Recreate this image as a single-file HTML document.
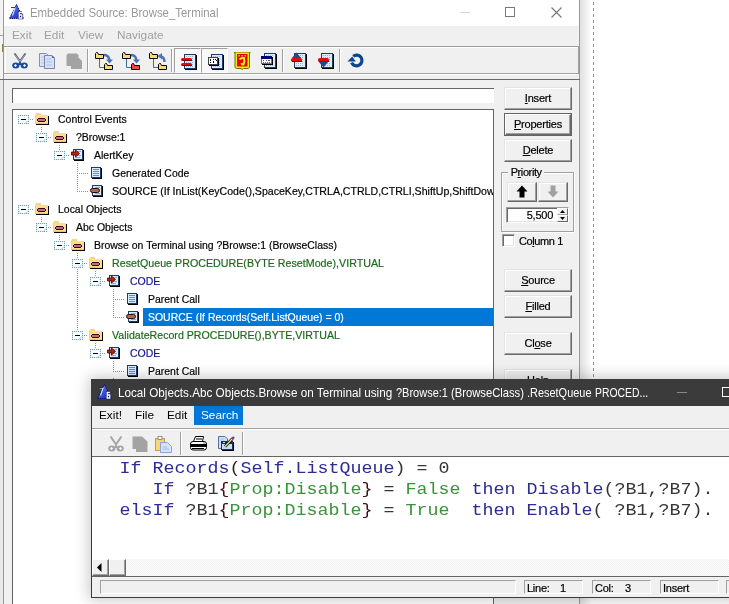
<!DOCTYPE html><html><head><meta charset="utf-8"><style>
#root{position:absolute;left:0;top:0;width:729px;height:604px;overflow:hidden;will-change:transform;background:#fff;}
html,body{margin:0;padding:0;}
body{width:729px;height:604px;overflow:hidden;position:relative;background:#fff;font-family:"Liberation Sans",sans-serif;}
div{box-sizing:border-box;}
svg{position:absolute;overflow:visible;}
.btn{letter-spacing:-0.2px;-webkit-text-stroke:0.2px currentColor;position:absolute;background:#f0f0f0;border-top:1px solid #e3e3e3;border-left:1px solid #e3e3e3;border-right:1px solid #696969;border-bottom:1px solid #696969;box-shadow:inset -1px -1px 0 #a0a0a0, inset 1px 1px 0 #fff;font-size:11px;text-align:center;color:#000;}
.tt{position:absolute;white-space:pre;font-size:11.5px;line-height:18px;color:#000;transform:scaleX(0.91);transform-origin:0 0;-webkit-text-stroke:0.2px currentColor;}
u{text-decoration:underline;text-underline-offset:1px;}
</style></head><body><div id="root">
<div style="position:absolute;left:0px;top:0px;width:3px;height:604px;background:#e9e9e9;"></div>
<div style="position:absolute;left:0px;top:0px;width:3px;height:79px;background:#f3f3f3;"></div>
<div style="position:absolute;left:0px;top:35px;width:3px;height:1px;background:#a0a0a0;"></div>
<div style="position:absolute;left:0px;top:79px;width:3px;height:1px;background:#6a6a6a;"></div>
<div style="position:absolute;left:2px;top:44px;width:1px;height:8px;background:#8a7a50;"></div>
<div style="position:absolute;left:593px;top:0px;width:1px;height:379px;background:repeating-linear-gradient(to bottom,transparent 0,transparent 2px,#8f8f8f 2px,#8f8f8f 5px,transparent 5px,transparent 6px);"></div>
<div style="position:absolute;left:580px;top:0px;width:12px;height:604px;background:linear-gradient(to right,rgba(0,0,0,0.12),rgba(0,0,0,0));"></div>
<div style="position:absolute;left:3px;top:0px;width:577px;height:604px;background:#f0f0f0;border-left:1px solid #9a9a9a;border-right:1px solid #9a9a9a;"></div>
<div style="position:absolute;left:4px;top:0px;width:575px;height:26px;background:#fff;"></div>
<svg style="left:9px;top:4px" width="16" height="16" viewBox="0 0 16 16"><defs><linearGradient id="cg" x1="0" y1="0" x2="1" y2="1"><stop offset="0" stop-color="#7088f0"/><stop offset="0.6" stop-color="#3048d8"/><stop offset="1" stop-color="#1828a8"/></linearGradient></defs><path d="M7.5 0.5 L14.5 14.5 L0.5 14.5 Z" fill="url(#cg)" stroke="#0a1470" stroke-width="1" stroke-dasharray="1.3 0.7"/><path d="M2.5 4 H6 L3.5 11.5" fill="none" stroke="#d8e0ff" stroke-width="1.1"/><path d="M2 3.5 H6" stroke="#101030" stroke-width="0.8"/><path d="M12.8 8.5 H10.2 V14 H12.8 V11 H10.2" fill="none" stroke="#0a1060" stroke-width="2.6"/><path d="M12.8 8.5 H10.2 V14 H12.8 V11 H10.2" fill="none" stroke="#fff" stroke-width="1.3"/></svg>
<div style="position:absolute;left:30px;top:5px;font-size:11.9px;line-height:16px;color:#999;white-space:pre;transform:scaleX(0.96);transform-origin:0 0;">Embedded Source: Browse_Terminal</div>
<div style="position:absolute;left:460px;top:12px;width:10px;height:1px;background:#d6d6d6;"></div>
<div style="position:absolute;left:505px;top:7px;width:10px;height:10px;border:1px solid #777;"></div>
<svg style="left:551px;top:7px" width="11" height="11" viewBox="0 0 11 11"><path d="M0.5 0.5 L10.5 10.5 M10.5 0.5 L0.5 10.5" stroke="#777" stroke-width="1.1"/></svg>
<div style="position:absolute;left:12px;top:28px;font-size:11.8px;line-height:14px;color:#a0a0a0;white-space:pre;">Exit</div>
<div style="position:absolute;left:44px;top:28px;font-size:11.8px;line-height:14px;color:#a0a0a0;white-space:pre;">Edit</div>
<div style="position:absolute;left:78px;top:28px;font-size:11.8px;line-height:14px;color:#a0a0a0;white-space:pre;">View</div>
<div style="position:absolute;left:117px;top:28px;font-size:11.8px;line-height:14px;color:#a0a0a0;white-space:pre;">Navigate</div>
<div style="position:absolute;left:4px;top:46px;width:575px;height:28px;border-top:1px solid #a0a0a0;border-bottom:1px solid #a0a0a0;border-right:1px solid #a0a0a0;"></div>
<div style="position:absolute;left:5px;top:47px;width:573px;height:1px;background:#fff;"></div>
<div style="position:absolute;left:5px;top:47px;width:1px;height:26px;background:#fff;"></div>
<div style="position:absolute;left:4px;top:74px;width:575px;height:1px;background:#fff;"></div>
<div style="position:absolute;left:3px;top:79px;width:577px;height:1px;background:#6a6a6a;"></div>
<div style="position:absolute;left:87px;top:49px;width:1px;height:23px;background:#a0a0a0;"></div>
<div style="position:absolute;left:88px;top:49px;width:1px;height:23px;background:#fff;"></div>
<div style="position:absolute;left:171px;top:49px;width:1px;height:23px;background:#a0a0a0;"></div>
<div style="position:absolute;left:172px;top:49px;width:1px;height:23px;background:#fff;"></div>
<div style="position:absolute;left:282px;top:49px;width:1px;height:23px;background:#a0a0a0;"></div>
<div style="position:absolute;left:283px;top:49px;width:1px;height:23px;background:#fff;"></div>
<div style="position:absolute;left:339px;top:49px;width:1px;height:23px;background:#a0a0a0;"></div>
<div style="position:absolute;left:340px;top:49px;width:1px;height:23px;background:#fff;"></div>
<div style="position:absolute;left:174px;top:48px;width:27px;height:25px;border-top:1px solid #a0a0a0;border-left:1px solid #a0a0a0;border-bottom:1px solid #fff;border-right:1px solid #fff;background:#f8f8f8;"></div>
<div style="position:absolute;left:201px;top:48px;width:27px;height:25px;border-top:1px solid #a0a0a0;border-left:1px solid #a0a0a0;border-bottom:1px solid #fff;border-right:1px solid #fff;background:#f8f8f8;"></div>
<svg style="left:12px;top:53px" width="17" height="17" viewBox="0 0 17 17"><path d="M2.5 0.5 L8.5 9 M13.5 0.5 L7.5 9" stroke="#505a70" stroke-width="2"/><path d="M3 1.5 L8 8.5 M13 1.5 L8 8.5" stroke="#c0c8d8" stroke-width="0.7"/><ellipse cx="3.8" cy="12.5" rx="3.6" ry="3" fill="#1a4aa0"/><ellipse cx="12.2" cy="12.5" rx="3.6" ry="3" fill="#1a4aa0"/><path d="M6.5 10 L8 8.5 L9.5 10 L9 12 H7 Z" fill="#1a4aa0"/><path d="M3.5 11 L5 12.5 L3.5 14 L2 12.5 Z M12.5 11 L14 12.5 L12.5 14 L11 12.5 Z" fill="#fff"/></svg>
<svg style="left:39px;top:53px" width="17" height="17" viewBox="0 0 17 17"><path d="M0.5 0.5 H7.5 L8.5 1.5 V13.5 H0.5 Z" fill="#dce6fa" stroke="#8890a8"/><path d="M2 4 H6 M2 7 H6 M2 10 H6" stroke="#b8c8e8"/><path d="M5.5 2.5 H13 L15.5 5 V15.5 H5.5 Z" fill="#d6e2fc" stroke="#7c84a0"/><path d="M13 2.5 L15.5 5 H13 Z" fill="#3a60b0"/><path d="M7 6 H12 M7 9 H13 M7 12 H13" stroke="#b0c0e4"/></svg>
<svg style="left:66px;top:53px" width="17" height="17" viewBox="0 0 17 17"><path d="M2 0.5 H11 L12.5 2 V5 H13 L16 8 V16 H5 V13 H0.5 V2 Z" fill="#a3a3a3"/></svg>
<svg style="left:95px;top:52px" width="19" height="19" viewBox="0 0 19 19"><path d="M4.5 7 V15.5 H9.5" fill="none" stroke="#3e6aa8" stroke-width="1"/><path d="M0.5 1.5 V6.5 H8.5 V2.5 H3.5 L2.5 0.5 H1.5 Z" fill="#f6dc78" stroke="#000"/><path d="M9 3 Q13.5 3 14.5 8" fill="none" stroke="#4a74b4" stroke-width="2.4"/><path d="M11 7.5 L18 7.5 L14.5 11.5 Z" fill="#4a74b4"/><path d="M9.5 12.5 V17.5 H17.5 V13.5 H12.5 L11.5 11.5 H10.5 Z" fill="#f8d878" stroke="#000"/></svg>
<svg style="left:122px;top:52px" width="19" height="19" viewBox="0 0 19 19"><path d="M4.5 7 V15.5 H9.5" fill="none" stroke="#3e6aa8" stroke-width="1"/><path d="M0.5 1.5 V6.5 H8.5 V2.5 H3.5 L2.5 0.5 H1.5 Z" fill="#f6dc78" stroke="#000"/><path d="M9 3 Q13.5 3 14.5 8" fill="none" stroke="#4a74b4" stroke-width="2.4"/><path d="M11 7.5 L18 7.5 L14.5 11.5 Z" fill="#4a74b4"/><path d="M9.5 12.5 V17.5 H17.5 V13.5 H12.5 L11.5 11.5 H10.5 Z" fill="#e84848" stroke="#000"/></svg>
<svg style="left:149px;top:52px" width="19" height="19" viewBox="0 0 19 19"><path d="M4.5 7 V15.5 H9.5" fill="none" stroke="#3e6aa8" stroke-width="1"/><path d="M0.5 1.5 V6.5 H8.5 V2.5 H3.5 L2.5 0.5 H1.5 Z" fill="#f6dc78" stroke="#000"/><path d="M9.5 4 Q15.5 4 15.5 10" fill="none" stroke="#4a74b4" stroke-width="2.4"/><path d="M13 1 L13 7.5 L9 4 Z" fill="#4a74b4"/><path d="M9.5 12.5 V17.5 H17.5 V13.5 H12.5 L11.5 11.5 H10.5 Z" fill="#f8d878" stroke="#000"/></svg>
<svg style="left:181px;top:54px" width="17" height="17" viewBox="0 0 17 17"><g shape-rendering="crispEdges"><rect x="15" y="1" width="1" height="15" fill="#000"/><rect x="4" y="15" width="12" height="1" fill="#000"/><rect x="3" y="0" width="12" height="15" fill="#1e3c6a"/><rect x="4" y="1" width="10" height="13" fill="#dcecfc"/></g><path d="M5 2.5 H13" stroke="#9ab4d4" stroke-dasharray="1 1"/><path d="M5 4.5 H13" stroke="#9ab4d4" stroke-dasharray="1 1"/><path d="M5 6.5 H13" stroke="#9ab4d4" stroke-dasharray="1 1"/><path d="M5 8.5 H13" stroke="#9ab4d4" stroke-dasharray="1 1"/><path d="M5 10.5 H13" stroke="#9ab4d4" stroke-dasharray="1 1"/><path d="M5 12.5 H13" stroke="#9ab4d4" stroke-dasharray="1 1"/><rect x="0" y="4" width="11" height="3" rx="1.5" fill="#e80808"/><rect x="1" y="6" width="10" height="1" fill="#7a0000"/><rect x="0" y="9" width="11" height="3" rx="1.5" fill="#e80808"/><rect x="1" y="11" width="10" height="1" fill="#7a0000"/></svg>
<svg style="left:208px;top:54px" width="17" height="17" viewBox="0 0 17 17"><g shape-rendering="crispEdges"><rect x="15" y="1" width="1" height="15" fill="#000"/><rect x="4" y="15" width="12" height="1" fill="#000"/><rect x="3" y="0" width="12" height="15" fill="#1e3c6a"/><rect x="4" y="1" width="10" height="13" fill="#dcecfc"/></g><path d="M5 2.5 H13" stroke="#9ab4d4" stroke-dasharray="1 1"/><path d="M5 4.5 H13" stroke="#9ab4d4" stroke-dasharray="1 1"/><path d="M5 6.5 H13" stroke="#9ab4d4" stroke-dasharray="1 1"/><path d="M5 8.5 H13" stroke="#9ab4d4" stroke-dasharray="1 1"/><path d="M5 10.5 H13" stroke="#9ab4d4" stroke-dasharray="1 1"/><path d="M5 12.5 H13" stroke="#9ab4d4" stroke-dasharray="1 1"/><g shape-rendering="crispEdges"><rect x="1" y="4" width="10" height="8" fill="#000"/><rect x="0" y="3" width="10" height="8" fill="#404040"/><rect x="1" y="4" width="8" height="6" fill="#fff"/><path d="M2 5.5 H3 M2 6.5 H2.5 M5 5.5 H6 M7 5.5 H8 M8 6.5 H8.5 M2 8.5 H3 M5 8.5 H6 M7.5 8.5 H8 M5 7.5 H5.5" stroke="#000"/></g></svg>
<svg style="left:234px;top:52px" width="17" height="18" viewBox="0 0 17 18"><path d="M0 0.5 H16.5" stroke="#6a6a00" stroke-width="1"/><path d="M1 0.5 V15.5 L2.5 16.5 H7 L8.2 17.5 L9.4 16.5 H14 L15.5 15.5 V0.5" fill="#f0f000" stroke="#6a6a00" stroke-width="1"/><rect x="3" y="2" width="10.5" height="12.5" fill="#e80000"/><path d="M5.5 7.5 Q7 5.5 10 6 Q11 10 9.5 12.5 Q8 13 7.5 11" fill="none" stroke="#f0f020" stroke-width="2"/><rect x="4.5" y="3" width="1.2" height="1.5" fill="#ffe0d0"/><rect x="7.5" y="3" width="1.2" height="1.5" fill="#ffe0d0"/><rect x="10.5" y="3" width="1.2" height="1.5" fill="#ffe0d0"/></svg>
<svg style="left:261px;top:53px" width="17" height="17" viewBox="0 0 17 17"><g shape-rendering="crispEdges"><rect x="15" y="1" width="1" height="15" fill="#000"/><rect x="4" y="15" width="12" height="1" fill="#000"/><rect x="3" y="0" width="12" height="15" fill="#1e3c6a"/><rect x="4" y="1" width="10" height="13" fill="#dcecfc"/></g><path d="M5 2.5 H13" stroke="#9ab4d4" stroke-dasharray="1 1"/><path d="M5 4.5 H13" stroke="#9ab4d4" stroke-dasharray="1 1"/><path d="M5 6.5 H13" stroke="#9ab4d4" stroke-dasharray="1 1"/><path d="M5 8.5 H13" stroke="#9ab4d4" stroke-dasharray="1 1"/><path d="M5 10.5 H13" stroke="#9ab4d4" stroke-dasharray="1 1"/><path d="M5 12.5 H13" stroke="#9ab4d4" stroke-dasharray="1 1"/><g shape-rendering="crispEdges"><rect x="1" y="4" width="11" height="8" fill="#000"/><rect x="0" y="3" width="11" height="8" fill="#707070"/><rect x="1" y="6" width="9" height="4" fill="#fff"/><rect x="0" y="3" width="11" height="3" fill="#000070"/><path d="M2 7.5 H3 M4.5 7.5 H5.5 M7 7.5 H9 M2 9 H3 M4 9 H5 M6 9 H7 M8 9 H9" stroke="#606060"/></g></svg>
<svg style="left:291px;top:53px" width="17" height="17" viewBox="0 0 17 17"><g shape-rendering="crispEdges"><rect x="15" y="1" width="1" height="15" fill="#000"/><rect x="4" y="15" width="12" height="1" fill="#000"/><rect x="3" y="0" width="12" height="15" fill="#1e3c6a"/><rect x="4" y="1" width="10" height="13" fill="#dcecfc"/></g><path d="M5 2.5 H13" stroke="#9ab4d4" stroke-dasharray="1 1"/><path d="M5 4.5 H13" stroke="#9ab4d4" stroke-dasharray="1 1"/><path d="M5 6.5 H13" stroke="#9ab4d4" stroke-dasharray="1 1"/><path d="M5 8.5 H13" stroke="#9ab4d4" stroke-dasharray="1 1"/><path d="M5 10.5 H13" stroke="#9ab4d4" stroke-dasharray="1 1"/><path d="M5 12.5 H13" stroke="#9ab4d4" stroke-dasharray="1 1"/><path d="M0.5 5.5 L5.5 -0.5 L10.5 5.5 Z" fill="#1e4a90"/><rect x="0" y="5" width="11" height="4" rx="1.8" fill="#e80808"/><rect x="1" y="8" width="10" height="1" fill="#7a0000"/></svg>
<svg style="left:318px;top:53px" width="17" height="17" viewBox="0 0 17 17"><g shape-rendering="crispEdges"><rect x="15" y="1" width="1" height="15" fill="#000"/><rect x="4" y="15" width="12" height="1" fill="#000"/><rect x="3" y="0" width="12" height="15" fill="#1e3c6a"/><rect x="4" y="1" width="10" height="13" fill="#dcecfc"/></g><path d="M5 2.5 H13" stroke="#9ab4d4" stroke-dasharray="1 1"/><path d="M5 4.5 H13" stroke="#9ab4d4" stroke-dasharray="1 1"/><path d="M5 6.5 H13" stroke="#9ab4d4" stroke-dasharray="1 1"/><path d="M5 8.5 H13" stroke="#9ab4d4" stroke-dasharray="1 1"/><path d="M5 10.5 H13" stroke="#9ab4d4" stroke-dasharray="1 1"/><path d="M5 12.5 H13" stroke="#9ab4d4" stroke-dasharray="1 1"/><rect x="0" y="5" width="11" height="4" rx="1.8" fill="#e80808"/><rect x="1" y="8" width="10" height="1" fill="#7a0000"/><path d="M0.5 8.5 L5.5 14.5 L10.5 8.5 Z" fill="#1e4a90"/></svg>
<svg style="left:348px;top:54px" width="17" height="15" viewBox="0 0 17 15"><path d="M5.2 2.2 A5.4 5.4 0 1 1 3.6 8.6" fill="none" stroke="#0c4490" stroke-width="3.2"/><path d="M-0.5 7.5 L4.2 2.6 L7.8 7.5 Z" fill="#0c4490"/></svg>
<div style="position:absolute;left:12px;top:88px;width:482px;height:15px;background:#fff;border-top:1px solid #646464;border-left:1px solid #646464;"></div>
<div style="position:absolute;left:12px;top:109px;width:482px;height:520px;background:#fff;border:1px solid #646464;"></div>
<div class="btn" style="left:504px;top:87px;width:68px;height:23px;line-height:20px;"><u>I</u>nsert</div>
<div style="position:absolute;left:504px;top:113px;width:68px;height:23px;border:1px solid #646464;"></div><div class="btn" style="left:505px;top:114px;width:66px;height:21px;line-height:18px;border-top-color:#fff;border-left-color:#fff;box-shadow:inset -1px -1px 0 #a0a0a0;"><u>P</u>roperties</div>
<div class="btn" style="left:504px;top:139px;width:68px;height:23px;line-height:20px;"><u>D</u>elete</div>
<div style="position:absolute;left:501px;top:172px;width:73px;height:60px;border:1px solid #a0a0a0;box-shadow:inset 1px 1px 0 #fff, 1px 1px 0 #fff;"></div>
<div style="position:absolute;left:508px;top:165px;font-size:11px;line-height:14px;color:#000;white-space:pre;letter-spacing:-0.25px;-webkit-text-stroke:0.2px currentColor;background:#f0f0f0;letter-spacing:-0.4px;"> P<u>r</u>iority </div>
<div class="btn" style="left:507px;top:182px;width:30px;height:20px;line-height:17px;"></div>
<div class="btn" style="left:538px;top:182px;width:30px;height:20px;line-height:17px;"></div>
<svg style="left:516px;top:185px" width="12" height="13" viewBox="0 0 12 13"><path d="M6 0.5 L11.5 6.5 H8.5 V12.5 H3.5 V6.5 H0.5 Z" fill="#000"/></svg>
<svg style="left:547px;top:185px" width="12" height="13" viewBox="0 0 12 13"><path d="M6 12.5 L11.5 6.5 H8.5 V0.5 H3.5 V6.5 H0.5 Z" fill="#a0a0a0"/></svg>
<div style="position:absolute;left:506px;top:207px;width:63px;height:16px;background:#fff;border-top:1px solid #a0a0a0;border-left:1px solid #a0a0a0;border-bottom:1px solid #fff;border-right:1px solid #fff;box-shadow:inset 1px 1px 0 #696969, inset -1px -1px 0 #e3e3e3;"></div>
<div style="position:absolute;left:506px;top:207px;font-size:11px;line-height:16px;color:#000;white-space:pre;letter-spacing:-0.25px;-webkit-text-stroke:0.2px currentColor;width:47px;text-align:right;">5,500</div>
<div style="position:absolute;left:557px;top:208px;width:11px;height:7px;background:#f0f0f0;border-top:1px solid #fff;border-left:1px solid #fff;border-right:1px solid #696969;border-bottom:1px solid #a0a0a0;"></div>
<div style="position:absolute;left:557px;top:215px;width:11px;height:7px;background:#f0f0f0;border-top:1px solid #fff;border-left:1px solid #fff;border-right:1px solid #696969;border-bottom:1px solid #696969;"></div>
<svg style="left:560px;top:210px" width="5" height="3" viewBox="0 0 5 3"><path d="M0 3 L2.5 0 L5 3 Z" fill="#000"/></svg>
<svg style="left:560px;top:217px" width="5" height="3" viewBox="0 0 5 3"><path d="M0 0 L2.5 3 L5 0 Z" fill="#000"/></svg>
<div style="position:absolute;left:502px;top:234px;width:13px;height:13px;background:#fff;border-top:1px solid #a0a0a0;border-left:1px solid #a0a0a0;border-right:1px solid #fff;border-bottom:1px solid #fff;box-shadow:inset 1px 1px 0 #696969, inset -1px -1px 0 #e3e3e3;"></div>
<div style="position:absolute;left:519px;top:234px;font-size:11px;line-height:14px;color:#000;white-space:pre;letter-spacing:-0.25px;-webkit-text-stroke:0.2px currentColor;letter-spacing:-0.4px;">Co<u>l</u>umn 1</div>
<div class="btn" style="left:504px;top:269px;width:68px;height:23px;line-height:20px;"><u>S</u>ource</div>
<div class="btn" style="left:504px;top:295px;width:68px;height:23px;line-height:20px;"><u>F</u>illed</div>
<div class="btn" style="left:504px;top:332px;width:68px;height:23px;line-height:20px;">Cl<u>o</u>se</div>
<div class="btn" style="left:504px;top:369px;width:68px;height:23px;line-height:20px;"><u>H</u>elp</div>
<div style="position:absolute;left:13px;top:110px;width:480px;height:494px;overflow:hidden;"><div style="position:absolute;left:-13px;top:-110px;width:729px;height:604px;"><svg style="left:18px;top:115px" width="11" height="9" viewBox="0 0 11 9"><g shape-rendering="crispEdges"><rect x="0" y="0" width="11" height="9" fill="#fafeff"/><path d="M0 0.5 H11 M0 8.5 H11 M0.5 0 V9 M10.5 0 V9" stroke="#d2eef6"/><path d="M0 0.5 H11 M0 8.5 H11 M0.5 0 V9 M10.5 0 V9" stroke="#7c9aa8" stroke-dasharray="1 1"/><rect x="3" y="4" width="5" height="1" fill="#000"/></g><path d="M10 5.5 L6.5 9" stroke="#b0c8d4" stroke-width="1"/></svg><div style="position:absolute;left:30px;top:119px;width:4px;height:1px;background:repeating-linear-gradient(to right,#909090 0,#909090 1px,transparent 1px,transparent 2px);"></div><svg style="left:35px;top:113px" width="15" height="13" viewBox="0 0 15 13"><g shape-rendering="crispEdges"><rect x="13" y="3" width="1" height="9" fill="#000"/><rect x="1" y="11" width="13" height="1" fill="#000"/><rect x="0" y="2" width="13" height="9" fill="#f9de8c"/><rect x="1" y="0" width="5" height="2" fill="#f7d880"/><rect x="0" y="1" width="1" height="1" fill="#fbe9b4"/><rect x="0" y="2" width="1" height="9" fill="#f5d070"/><rect x="0" y="10" width="13" height="1" fill="#f0c860"/><rect x="3" y="5" width="7" height="1" fill="#3a0818"/><rect x="3" y="8" width="7" height="1" fill="#3a0818"/><rect x="2" y="6" width="1" height="2" fill="#3a0818"/><rect x="10" y="6" width="1" height="2" fill="#3a0818"/><rect x="3" y="6" width="7" height="2" fill="#c46a8e"/></g></svg><div style="position:absolute;left:41px;top:127px;width:1px;height:6px;background:repeating-linear-gradient(to bottom,#909090 0,#909090 1px,transparent 1px,transparent 2px);"></div><div class="tt" style="left:58px;top:110px;color:#000;">Control Events</div><svg style="left:36px;top:133px" width="11" height="9" viewBox="0 0 11 9"><g shape-rendering="crispEdges"><rect x="0" y="0" width="11" height="9" fill="#fafeff"/><path d="M0 0.5 H11 M0 8.5 H11 M0.5 0 V9 M10.5 0 V9" stroke="#d2eef6"/><path d="M0 0.5 H11 M0 8.5 H11 M0.5 0 V9 M10.5 0 V9" stroke="#7c9aa8" stroke-dasharray="1 1"/><rect x="3" y="4" width="5" height="1" fill="#000"/></g><path d="M10 5.5 L6.5 9" stroke="#b0c8d4" stroke-width="1"/></svg><div style="position:absolute;left:48px;top:137px;width:4px;height:1px;background:repeating-linear-gradient(to right,#909090 0,#909090 1px,transparent 1px,transparent 2px);"></div><svg style="left:53px;top:131px" width="15" height="13" viewBox="0 0 15 13"><g shape-rendering="crispEdges"><rect x="13" y="3" width="1" height="9" fill="#000"/><rect x="1" y="11" width="13" height="1" fill="#000"/><rect x="0" y="2" width="13" height="9" fill="#f9de8c"/><rect x="1" y="0" width="5" height="2" fill="#f7d880"/><rect x="0" y="1" width="1" height="1" fill="#fbe9b4"/><rect x="0" y="2" width="1" height="9" fill="#f5d070"/><rect x="0" y="10" width="13" height="1" fill="#f0c860"/><rect x="3" y="5" width="7" height="1" fill="#3a0818"/><rect x="3" y="8" width="7" height="1" fill="#3a0818"/><rect x="2" y="6" width="1" height="2" fill="#3a0818"/><rect x="10" y="6" width="1" height="2" fill="#3a0818"/><rect x="3" y="6" width="7" height="2" fill="#c46a8e"/></g></svg><div style="position:absolute;left:59px;top:145px;width:1px;height:6px;background:repeating-linear-gradient(to bottom,#909090 0,#909090 1px,transparent 1px,transparent 2px);"></div><div class="tt" style="left:76px;top:128px;color:#000;">?Browse:1</div><svg style="left:54px;top:151px" width="11" height="9" viewBox="0 0 11 9"><g shape-rendering="crispEdges"><rect x="0" y="0" width="11" height="9" fill="#fafeff"/><path d="M0 0.5 H11 M0 8.5 H11 M0.5 0 V9 M10.5 0 V9" stroke="#d2eef6"/><path d="M0 0.5 H11 M0 8.5 H11 M0.5 0 V9 M10.5 0 V9" stroke="#7c9aa8" stroke-dasharray="1 1"/><rect x="3" y="4" width="5" height="1" fill="#000"/></g><path d="M10 5.5 L6.5 9" stroke="#b0c8d4" stroke-width="1"/></svg><div style="position:absolute;left:66px;top:155px;width:4px;height:1px;background:repeating-linear-gradient(to right,#909090 0,#909090 1px,transparent 1px,transparent 2px);"></div><svg style="left:71px;top:149px" width="14" height="13" viewBox="0 0 14 13"><g shape-rendering="crispEdges"><rect x="12" y="1" width="1" height="11" fill="#000"/><rect x="3" y="11" width="10" height="1" fill="#000"/><rect x="2" y="0" width="10" height="11" fill="#1e3c6a"/><rect x="3" y="1" width="8" height="9" fill="#dcecfc"/></g><g shape-rendering="crispEdges"><rect x="6" y="2" width="4" height="1" fill="#88a8c8"/><rect x="6" y="6" width="4" height="1" fill="#88a8c8"/><rect x="4" y="8" width="5" height="1" fill="#88a8c8"/></g><path d="M0.5 3 H4.5 V1 L8.5 4.5 L4.5 8 V6 H0.5 Z" fill="#c41c0c" stroke="#3a0800" stroke-width="0.8"/></svg><div style="position:absolute;left:77px;top:163px;width:1px;height:29px;background:repeating-linear-gradient(to bottom,#909090 0,#909090 1px,transparent 1px,transparent 2px);"></div><div class="tt" style="left:94px;top:146px;color:#000;">AlertKey</div><div style="position:absolute;left:79px;top:173px;width:10px;height:1px;background:repeating-linear-gradient(to right,#909090 0,#909090 1px,transparent 1px,transparent 2px);"></div><svg style="left:91px;top:167px" width="12" height="12" viewBox="0 0 12 12"><g shape-rendering="crispEdges"><rect x="10" y="1" width="1" height="11" fill="#000"/><rect x="1" y="11" width="10" height="1" fill="#000"/><rect x="0" y="0" width="10" height="11" fill="#1e3c6a"/><rect x="1" y="1" width="8" height="9" fill="#dcecfc"/></g><g shape-rendering="crispEdges"><rect x="2" y="2" width="6" height="1" fill="#6c8cb0"/><rect x="2" y="4" width="6" height="1" fill="#6c8cb0"/><rect x="2" y="6" width="6" height="1" fill="#6c8cb0"/><rect x="2" y="8" width="6" height="1" fill="#6c8cb0"/></g></svg><div class="tt" style="left:112px;top:164px;color:#000;">Generated Code</div><div style="position:absolute;left:79px;top:191px;width:10px;height:1px;background:repeating-linear-gradient(to right,#909090 0,#909090 1px,transparent 1px,transparent 2px);"></div><svg style="left:90px;top:185px" width="14" height="13" viewBox="0 0 14 13"><g shape-rendering="crispEdges"><rect x="12" y="1" width="1" height="11" fill="#000"/><rect x="3" y="11" width="10" height="1" fill="#000"/><rect x="2" y="0" width="10" height="11" fill="#1e3c6a"/><rect x="3" y="1" width="8" height="9" fill="#dcecfc"/></g><g shape-rendering="crispEdges"><rect x="5" y="2" width="5" height="1" fill="#88a8c8"/><rect x="5" y="8" width="5" height="1" fill="#88a8c8"/></g><rect x="0.5" y="3.5" width="9" height="4" rx="2" fill="#b06a58" stroke="#2a0a08" stroke-width="1"/></svg><div class="tt" style="left:112px;top:182px;color:#000;transform:scaleX(0.92);">SOURCE (If InList(KeyCode(),SpaceKey,CTRLA,CTRLD,CTRLI,ShiftUp,ShiftDow</div><svg style="left:18px;top:205px" width="11" height="9" viewBox="0 0 11 9"><g shape-rendering="crispEdges"><rect x="0" y="0" width="11" height="9" fill="#fafeff"/><path d="M0 0.5 H11 M0 8.5 H11 M0.5 0 V9 M10.5 0 V9" stroke="#d2eef6"/><path d="M0 0.5 H11 M0 8.5 H11 M0.5 0 V9 M10.5 0 V9" stroke="#7c9aa8" stroke-dasharray="1 1"/><rect x="3" y="4" width="5" height="1" fill="#000"/></g><path d="M10 5.5 L6.5 9" stroke="#b0c8d4" stroke-width="1"/></svg><div style="position:absolute;left:30px;top:209px;width:4px;height:1px;background:repeating-linear-gradient(to right,#909090 0,#909090 1px,transparent 1px,transparent 2px);"></div><svg style="left:35px;top:203px" width="15" height="13" viewBox="0 0 15 13"><g shape-rendering="crispEdges"><rect x="13" y="3" width="1" height="9" fill="#000"/><rect x="1" y="11" width="13" height="1" fill="#000"/><rect x="0" y="2" width="13" height="9" fill="#f9de8c"/><rect x="1" y="0" width="5" height="2" fill="#f7d880"/><rect x="0" y="1" width="1" height="1" fill="#fbe9b4"/><rect x="0" y="2" width="1" height="9" fill="#f5d070"/><rect x="0" y="10" width="13" height="1" fill="#f0c860"/><rect x="3" y="5" width="7" height="1" fill="#3a0818"/><rect x="3" y="8" width="7" height="1" fill="#3a0818"/><rect x="2" y="6" width="1" height="2" fill="#3a0818"/><rect x="10" y="6" width="1" height="2" fill="#3a0818"/><rect x="3" y="6" width="7" height="2" fill="#c46a8e"/></g></svg><div style="position:absolute;left:41px;top:217px;width:1px;height:6px;background:repeating-linear-gradient(to bottom,#909090 0,#909090 1px,transparent 1px,transparent 2px);"></div><div class="tt" style="left:58px;top:200px;color:#000;">Local Objects</div><svg style="left:36px;top:223px" width="11" height="9" viewBox="0 0 11 9"><g shape-rendering="crispEdges"><rect x="0" y="0" width="11" height="9" fill="#fafeff"/><path d="M0 0.5 H11 M0 8.5 H11 M0.5 0 V9 M10.5 0 V9" stroke="#d2eef6"/><path d="M0 0.5 H11 M0 8.5 H11 M0.5 0 V9 M10.5 0 V9" stroke="#7c9aa8" stroke-dasharray="1 1"/><rect x="3" y="4" width="5" height="1" fill="#000"/></g><path d="M10 5.5 L6.5 9" stroke="#b0c8d4" stroke-width="1"/></svg><div style="position:absolute;left:48px;top:227px;width:4px;height:1px;background:repeating-linear-gradient(to right,#909090 0,#909090 1px,transparent 1px,transparent 2px);"></div><svg style="left:53px;top:221px" width="15" height="13" viewBox="0 0 15 13"><g shape-rendering="crispEdges"><rect x="13" y="3" width="1" height="9" fill="#000"/><rect x="1" y="11" width="13" height="1" fill="#000"/><rect x="0" y="2" width="13" height="9" fill="#f9de8c"/><rect x="1" y="0" width="5" height="2" fill="#f7d880"/><rect x="0" y="1" width="1" height="1" fill="#fbe9b4"/><rect x="0" y="2" width="1" height="9" fill="#f5d070"/><rect x="0" y="10" width="13" height="1" fill="#f0c860"/><rect x="3" y="5" width="7" height="1" fill="#3a0818"/><rect x="3" y="8" width="7" height="1" fill="#3a0818"/><rect x="2" y="6" width="1" height="2" fill="#3a0818"/><rect x="10" y="6" width="1" height="2" fill="#3a0818"/><rect x="3" y="6" width="7" height="2" fill="#c46a8e"/></g></svg><div style="position:absolute;left:59px;top:235px;width:1px;height:6px;background:repeating-linear-gradient(to bottom,#909090 0,#909090 1px,transparent 1px,transparent 2px);"></div><div class="tt" style="left:76px;top:218px;color:#000;">Abc Objects</div><svg style="left:54px;top:241px" width="11" height="9" viewBox="0 0 11 9"><g shape-rendering="crispEdges"><rect x="0" y="0" width="11" height="9" fill="#fafeff"/><path d="M0 0.5 H11 M0 8.5 H11 M0.5 0 V9 M10.5 0 V9" stroke="#d2eef6"/><path d="M0 0.5 H11 M0 8.5 H11 M0.5 0 V9 M10.5 0 V9" stroke="#7c9aa8" stroke-dasharray="1 1"/><rect x="3" y="4" width="5" height="1" fill="#000"/></g><path d="M10 5.5 L6.5 9" stroke="#b0c8d4" stroke-width="1"/></svg><div style="position:absolute;left:66px;top:245px;width:4px;height:1px;background:repeating-linear-gradient(to right,#909090 0,#909090 1px,transparent 1px,transparent 2px);"></div><svg style="left:71px;top:239px" width="15" height="13" viewBox="0 0 15 13"><g shape-rendering="crispEdges"><rect x="13" y="3" width="1" height="9" fill="#000"/><rect x="1" y="11" width="13" height="1" fill="#000"/><rect x="0" y="2" width="13" height="9" fill="#f9de8c"/><rect x="1" y="0" width="5" height="2" fill="#f7d880"/><rect x="0" y="1" width="1" height="1" fill="#fbe9b4"/><rect x="0" y="2" width="1" height="9" fill="#f5d070"/><rect x="0" y="10" width="13" height="1" fill="#f0c860"/><rect x="3" y="5" width="7" height="1" fill="#3a0818"/><rect x="3" y="8" width="7" height="1" fill="#3a0818"/><rect x="2" y="6" width="1" height="2" fill="#3a0818"/><rect x="10" y="6" width="1" height="2" fill="#3a0818"/><rect x="3" y="6" width="7" height="2" fill="#c46a8e"/></g></svg><div style="position:absolute;left:77px;top:253px;width:1px;height:78px;background:repeating-linear-gradient(to bottom,#909090 0,#909090 1px,transparent 1px,transparent 2px);"></div><div class="tt" style="left:94px;top:236px;color:#000;">Browse on Terminal using ?Browse:1 (BrowseClass)</div><svg style="left:72px;top:259px" width="11" height="9" viewBox="0 0 11 9"><g shape-rendering="crispEdges"><rect x="0" y="0" width="11" height="9" fill="#fafeff"/><path d="M0 0.5 H11 M0 8.5 H11 M0.5 0 V9 M10.5 0 V9" stroke="#d2eef6"/><path d="M0 0.5 H11 M0 8.5 H11 M0.5 0 V9 M10.5 0 V9" stroke="#7c9aa8" stroke-dasharray="1 1"/><rect x="3" y="4" width="5" height="1" fill="#000"/></g><path d="M10 5.5 L6.5 9" stroke="#b0c8d4" stroke-width="1"/></svg><div style="position:absolute;left:84px;top:263px;width:4px;height:1px;background:repeating-linear-gradient(to right,#909090 0,#909090 1px,transparent 1px,transparent 2px);"></div><svg style="left:89px;top:257px" width="15" height="13" viewBox="0 0 15 13"><g shape-rendering="crispEdges"><rect x="13" y="3" width="1" height="9" fill="#000"/><rect x="1" y="11" width="13" height="1" fill="#000"/><rect x="0" y="2" width="13" height="9" fill="#f9de8c"/><rect x="1" y="0" width="5" height="2" fill="#f7d880"/><rect x="0" y="1" width="1" height="1" fill="#fbe9b4"/><rect x="0" y="2" width="1" height="9" fill="#f5d070"/><rect x="0" y="10" width="13" height="1" fill="#f0c860"/><rect x="3" y="5" width="7" height="1" fill="#3a0818"/><rect x="3" y="8" width="7" height="1" fill="#3a0818"/><rect x="2" y="6" width="1" height="2" fill="#3a0818"/><rect x="10" y="6" width="1" height="2" fill="#3a0818"/><rect x="3" y="6" width="7" height="2" fill="#c46a8e"/></g></svg><div style="position:absolute;left:95px;top:271px;width:1px;height:6px;background:repeating-linear-gradient(to bottom,#909090 0,#909090 1px,transparent 1px,transparent 2px);"></div><div class="tt" style="left:112px;top:254px;color:#1a6c1a;transform:scaleX(0.93);">ResetQueue PROCEDURE(BYTE ResetMode),VIRTUAL</div><svg style="left:90px;top:277px" width="11" height="9" viewBox="0 0 11 9"><g shape-rendering="crispEdges"><rect x="0" y="0" width="11" height="9" fill="#fafeff"/><path d="M0 0.5 H11 M0 8.5 H11 M0.5 0 V9 M10.5 0 V9" stroke="#d2eef6"/><path d="M0 0.5 H11 M0 8.5 H11 M0.5 0 V9 M10.5 0 V9" stroke="#7c9aa8" stroke-dasharray="1 1"/><rect x="3" y="4" width="5" height="1" fill="#000"/></g><path d="M10 5.5 L6.5 9" stroke="#b0c8d4" stroke-width="1"/></svg><div style="position:absolute;left:102px;top:281px;width:4px;height:1px;background:repeating-linear-gradient(to right,#909090 0,#909090 1px,transparent 1px,transparent 2px);"></div><svg style="left:107px;top:275px" width="14" height="13" viewBox="0 0 14 13"><g shape-rendering="crispEdges"><rect x="12" y="1" width="1" height="11" fill="#000"/><rect x="3" y="11" width="10" height="1" fill="#000"/><rect x="2" y="0" width="10" height="11" fill="#1e3c6a"/><rect x="3" y="1" width="8" height="9" fill="#dcecfc"/></g><g shape-rendering="crispEdges"><rect x="6" y="2" width="4" height="1" fill="#88a8c8"/><rect x="6" y="6" width="4" height="1" fill="#88a8c8"/><rect x="4" y="8" width="5" height="1" fill="#88a8c8"/></g><path d="M0.5 3 H4.5 V1 L8.5 4.5 L4.5 8 V6 H0.5 Z" fill="#c41c0c" stroke="#3a0800" stroke-width="0.8"/></svg><div style="position:absolute;left:113px;top:289px;width:1px;height:29px;background:repeating-linear-gradient(to bottom,#909090 0,#909090 1px,transparent 1px,transparent 2px);"></div><div class="tt" style="left:130px;top:272px;color:#12128a;">CODE</div><div style="position:absolute;left:115px;top:299px;width:10px;height:1px;background:repeating-linear-gradient(to right,#909090 0,#909090 1px,transparent 1px,transparent 2px);"></div><svg style="left:127px;top:293px" width="12" height="12" viewBox="0 0 12 12"><g shape-rendering="crispEdges"><rect x="10" y="1" width="1" height="11" fill="#000"/><rect x="1" y="11" width="10" height="1" fill="#000"/><rect x="0" y="0" width="10" height="11" fill="#1e3c6a"/><rect x="1" y="1" width="8" height="9" fill="#dcecfc"/></g><g shape-rendering="crispEdges"><rect x="2" y="2" width="6" height="1" fill="#6c8cb0"/><rect x="2" y="4" width="6" height="1" fill="#6c8cb0"/><rect x="2" y="6" width="6" height="1" fill="#6c8cb0"/><rect x="2" y="8" width="6" height="1" fill="#6c8cb0"/></g></svg><div class="tt" style="left:148px;top:290px;color:#000;">Parent Call</div><div style="position:absolute;left:115px;top:317px;width:10px;height:1px;background:repeating-linear-gradient(to right,#909090 0,#909090 1px,transparent 1px,transparent 2px);"></div><svg style="left:126px;top:311px" width="14" height="13" viewBox="0 0 14 13"><g shape-rendering="crispEdges"><rect x="12" y="1" width="1" height="11" fill="#000"/><rect x="3" y="11" width="10" height="1" fill="#000"/><rect x="2" y="0" width="10" height="11" fill="#1e3c6a"/><rect x="3" y="1" width="8" height="9" fill="#dcecfc"/></g><g shape-rendering="crispEdges"><rect x="5" y="2" width="5" height="1" fill="#88a8c8"/><rect x="5" y="8" width="5" height="1" fill="#88a8c8"/></g><rect x="0.5" y="3.5" width="9" height="4" rx="2" fill="#b06a58" stroke="#2a0a08" stroke-width="1"/></svg><div style="position:absolute;left:143px;top:308px;width:350px;height:18px;background:#0078d7;"></div><div class="tt" style="left:148px;top:308px;color:#fff;">SOURCE (If Records(Self.ListQueue) = 0)</div><svg style="left:72px;top:331px" width="11" height="9" viewBox="0 0 11 9"><g shape-rendering="crispEdges"><rect x="0" y="0" width="11" height="9" fill="#fafeff"/><path d="M0 0.5 H11 M0 8.5 H11 M0.5 0 V9 M10.5 0 V9" stroke="#d2eef6"/><path d="M0 0.5 H11 M0 8.5 H11 M0.5 0 V9 M10.5 0 V9" stroke="#7c9aa8" stroke-dasharray="1 1"/><rect x="3" y="4" width="5" height="1" fill="#000"/></g><path d="M10 5.5 L6.5 9" stroke="#b0c8d4" stroke-width="1"/></svg><div style="position:absolute;left:84px;top:335px;width:4px;height:1px;background:repeating-linear-gradient(to right,#909090 0,#909090 1px,transparent 1px,transparent 2px);"></div><svg style="left:89px;top:329px" width="15" height="13" viewBox="0 0 15 13"><g shape-rendering="crispEdges"><rect x="13" y="3" width="1" height="9" fill="#000"/><rect x="1" y="11" width="13" height="1" fill="#000"/><rect x="0" y="2" width="13" height="9" fill="#f9de8c"/><rect x="1" y="0" width="5" height="2" fill="#f7d880"/><rect x="0" y="1" width="1" height="1" fill="#fbe9b4"/><rect x="0" y="2" width="1" height="9" fill="#f5d070"/><rect x="0" y="10" width="13" height="1" fill="#f0c860"/><rect x="3" y="5" width="7" height="1" fill="#3a0818"/><rect x="3" y="8" width="7" height="1" fill="#3a0818"/><rect x="2" y="6" width="1" height="2" fill="#3a0818"/><rect x="10" y="6" width="1" height="2" fill="#3a0818"/><rect x="3" y="6" width="7" height="2" fill="#c46a8e"/></g></svg><div style="position:absolute;left:95px;top:343px;width:1px;height:6px;background:repeating-linear-gradient(to bottom,#909090 0,#909090 1px,transparent 1px,transparent 2px);"></div><div class="tt" style="left:112px;top:326px;color:#1a6c1a;transform:scaleX(0.923);">ValidateRecord PROCEDURE(),BYTE,VIRTUAL</div><svg style="left:90px;top:349px" width="11" height="9" viewBox="0 0 11 9"><g shape-rendering="crispEdges"><rect x="0" y="0" width="11" height="9" fill="#fafeff"/><path d="M0 0.5 H11 M0 8.5 H11 M0.5 0 V9 M10.5 0 V9" stroke="#d2eef6"/><path d="M0 0.5 H11 M0 8.5 H11 M0.5 0 V9 M10.5 0 V9" stroke="#7c9aa8" stroke-dasharray="1 1"/><rect x="3" y="4" width="5" height="1" fill="#000"/></g><path d="M10 5.5 L6.5 9" stroke="#b0c8d4" stroke-width="1"/></svg><div style="position:absolute;left:102px;top:353px;width:4px;height:1px;background:repeating-linear-gradient(to right,#909090 0,#909090 1px,transparent 1px,transparent 2px);"></div><svg style="left:107px;top:347px" width="14" height="13" viewBox="0 0 14 13"><g shape-rendering="crispEdges"><rect x="12" y="1" width="1" height="11" fill="#000"/><rect x="3" y="11" width="10" height="1" fill="#000"/><rect x="2" y="0" width="10" height="11" fill="#1e3c6a"/><rect x="3" y="1" width="8" height="9" fill="#dcecfc"/></g><g shape-rendering="crispEdges"><rect x="6" y="2" width="4" height="1" fill="#88a8c8"/><rect x="6" y="6" width="4" height="1" fill="#88a8c8"/><rect x="4" y="8" width="5" height="1" fill="#88a8c8"/></g><path d="M0.5 3 H4.5 V1 L8.5 4.5 L4.5 8 V6 H0.5 Z" fill="#c41c0c" stroke="#3a0800" stroke-width="0.8"/></svg><div style="position:absolute;left:113px;top:361px;width:1px;height:11px;background:repeating-linear-gradient(to bottom,#909090 0,#909090 1px,transparent 1px,transparent 2px);"></div><div class="tt" style="left:130px;top:344px;color:#12128a;">CODE</div><div style="position:absolute;left:115px;top:371px;width:10px;height:1px;background:repeating-linear-gradient(to right,#909090 0,#909090 1px,transparent 1px,transparent 2px);"></div><svg style="left:127px;top:365px" width="12" height="12" viewBox="0 0 12 12"><g shape-rendering="crispEdges"><rect x="10" y="1" width="1" height="11" fill="#000"/><rect x="1" y="11" width="10" height="1" fill="#000"/><rect x="0" y="0" width="10" height="11" fill="#1e3c6a"/><rect x="1" y="1" width="8" height="9" fill="#dcecfc"/></g><g shape-rendering="crispEdges"><rect x="2" y="2" width="6" height="1" fill="#6c8cb0"/><rect x="2" y="4" width="6" height="1" fill="#6c8cb0"/><rect x="2" y="6" width="6" height="1" fill="#6c8cb0"/><rect x="2" y="8" width="6" height="1" fill="#6c8cb0"/></g></svg><div class="tt" style="left:148px;top:362px;color:#000;">Parent Call</div><div style="position:absolute;left:113px;top:378px;width:1px;height:12px;background:repeating-linear-gradient(to bottom,#909090 0,#909090 1px,transparent 1px,transparent 2px);"></div></div></div>
<div style="position:absolute;left:91px;top:379px;width:700px;height:219px;box-shadow:0 0 14px 2px rgba(0,0,0,0.22);background:#f0f0f0;"></div>
<div style="position:absolute;left:91px;top:379px;width:640px;height:219px;border:1px solid #3c3c3c;border-right:none;background:#f0f0f0;"></div>
<div style="position:absolute;left:92px;top:379px;width:637px;height:27px;background:#3b3b3b;"></div>
<svg style="left:97px;top:384px" width="16" height="16" viewBox="0 0 16 16"><defs><linearGradient id="cg" x1="0" y1="0" x2="1" y2="1"><stop offset="0" stop-color="#7088f0"/><stop offset="0.6" stop-color="#3048d8"/><stop offset="1" stop-color="#1828a8"/></linearGradient></defs><path d="M7.5 0.5 L14.5 14.5 L0.5 14.5 Z" fill="url(#cg)" stroke="#0a1470" stroke-width="1" stroke-dasharray="1.3 0.7"/><path d="M2.5 4 H6 L3.5 11.5" fill="none" stroke="#d8e0ff" stroke-width="1.1"/><path d="M2 3.5 H6" stroke="#101030" stroke-width="0.8"/><path d="M12.8 8.5 H10.2 V14 H12.8 V11 H10.2" fill="none" stroke="#0a1060" stroke-width="2.6"/><path d="M12.8 8.5 H10.2 V14 H12.8 V11 H10.2" fill="none" stroke="#fff" stroke-width="1.3"/></svg>
<div style="position:absolute;left:117.5px;top:385px;font-size:11.9px;line-height:17px;color:#fff;white-space:pre;transform:scaleX(0.984);transform-origin:0 0;">Local Objects.Abc Objects.Browse on Terminal using</div>
<div style="position:absolute;left:395.5px;top:385px;font-size:11.9px;line-height:17px;color:#fff;white-space:pre;transform:scaleX(0.925);transform-origin:0 0;">?Browse:1</div>
<div style="position:absolute;left:450.5px;top:385px;font-size:11.9px;line-height:17px;color:#fff;white-space:pre;transform:scaleX(0.944);transform-origin:0 0;">(BrowseClass)</div>
<div style="position:absolute;left:527px;top:385px;font-size:11.9px;line-height:17px;color:#fff;white-space:pre;transform:scaleX(0.92);transform-origin:0 0;">.ResetQueue</div>
<div style="position:absolute;left:595px;top:385px;font-size:11.9px;line-height:17px;color:#fff;white-space:pre;transform:scaleX(0.875);transform-origin:0 0;">PROCED...</div>
<div style="position:absolute;left:677px;top:392px;width:10px;height:1px;background:#8a8a8a;"></div>
<div style="position:absolute;left:722px;top:387px;width:12px;height:10px;border:1px solid #fff;"></div>
<div style="position:absolute;left:99px;top:407px;font-size:11.8px;line-height:16px;color:#000;white-space:pre;">Exit!</div>
<div style="position:absolute;left:135px;top:407px;font-size:11.8px;line-height:16px;color:#000;white-space:pre;">File</div>
<div style="position:absolute;left:167px;top:407px;font-size:11.8px;line-height:16px;color:#000;white-space:pre;">Edit</div>
<div style="position:absolute;left:194px;top:406px;width:49px;height:19px;background:#0078d7;"></div>
<div style="position:absolute;left:201px;top:407px;font-size:11.8px;line-height:16px;color:#fff;white-space:pre;">Search</div>
<div style="position:absolute;left:92px;top:428px;width:637px;height:1px;background:#a0a0a0;"></div>
<div style="position:absolute;left:92px;top:429px;width:637px;height:1px;background:#fff;"></div>
<div style="position:absolute;left:92px;top:456px;width:637px;height:1px;background:#646464;"></div>
<div style="position:absolute;left:180px;top:432px;width:1px;height:23px;background:#a0a0a0;"></div>
<div style="position:absolute;left:181px;top:432px;width:1px;height:23px;background:#fff;"></div>
<div style="position:absolute;left:242px;top:432px;width:1px;height:23px;background:#a0a0a0;"></div>
<div style="position:absolute;left:243px;top:432px;width:1px;height:23px;background:#fff;"></div>
<svg style="left:108px;top:436px" width="17" height="17" viewBox="0 0 17 17"><path d="M2.5 0.5 L8.5 9 M13.5 0.5 L7.5 9" stroke="#a6a6a6" stroke-width="2"/><path d="M3 1.5 L8 8.5 M13 1.5 L8 8.5" stroke="#a6a6a6" stroke-width="0.7"/><ellipse cx="3.8" cy="12.5" rx="3.6" ry="3" fill="#a6a6a6"/><ellipse cx="12.2" cy="12.5" rx="3.6" ry="3" fill="#a6a6a6"/><path d="M6.5 10 L8 8.5 L9.5 10 L9 12 H7 Z" fill="#a6a6a6"/><path d="M3.5 11 L5 12.5 L3.5 14 L2 12.5 Z M12.5 11 L14 12.5 L12.5 14 L11 12.5 Z" fill="#fff"/></svg>
<svg style="left:132px;top:436px" width="17" height="17" viewBox="0 0 17 17"><path d="M0.5 0.5 H10 L15.5 5.5 V16 H4 V13 H0.5 Z" fill="#a3a3a3"/></svg>
<svg style="left:155px;top:436px" width="17" height="17" viewBox="0 0 17 17"><rect x="0.5" y="2.5" width="9" height="12" fill="#f6d676" stroke="#c8a040"/><rect x="3" y="0.5" width="4" height="3" fill="#fff" stroke="#909090"/><path d="M5.5 6.5 H12.5 L16.5 10.5 V16.5 H5.5 Z" fill="#d6e2f6" stroke="#8aa4d4"/><path d="M7.5 11 H12 M7.5 13 H14" stroke="#a8bce0"/></svg>
<svg style="left:190px;top:436px" width="17" height="15" viewBox="0 0 17 15"><path d="M5.5 0.5 H13.5 L12.5 5.5 H3.5 Z" fill="#fff" stroke="#000"/><path d="M6 3 H12" stroke="#000" stroke-width="1"/><rect x="0.5" y="5.5" width="16" height="8.5" rx="2.5" fill="#fff" stroke="#000"/><rect x="1" y="8" width="15" height="3" fill="#000"/><path d="M2 12.5 H14" stroke="#000" stroke-width="1"/><path d="M13 7 H15" stroke="#808080" stroke-width="1"/></svg>
<svg style="left:218px;top:436px" width="18" height="16" viewBox="0 0 18 16"><path d="M0.5 0.5 H7 L9.5 3 V12.5 H0.5 Z" fill="#d0e0f4" stroke="#5070a0"/><path d="M2 3 H6 M2 5 H7" stroke="#a8c0e0"/><g shape-rendering="crispEdges"><rect x="4" y="6" width="12" height="9" fill="#000"/><rect x="3" y="5" width="12" height="9" fill="#203060"/><rect x="4" y="8" width="10" height="5" fill="#c8dcf0"/><rect x="5" y="6" width="2" height="1" fill="#c0d8f0"/></g><path d="M7 10.5 L14.5 2.5" stroke="#000" stroke-width="2.6"/><path d="M7 10.5 L14.5 2.5" stroke="#f0f080" stroke-width="1.2"/><path d="M14 3 L16 1" stroke="#a020a0" stroke-width="2.4"/></svg>
<div style="position:absolute;left:92px;top:457px;width:637px;height:102px;background:#fff;"></div>
<div style="position:absolute;left:119.5px;top:460px;font-family:'Liberation Mono',monospace;font-size:18.33px;line-height:22px;white-space:pre;transform:scaleY(0.89);transform-origin:0 0;"><span style="color:#2c2c94">If </span><span style="color:#2c2c94">Records</span><span style="color:#3a2020">(</span><span style="color:#2c2c94">Self.ListQueue</span><span style="color:#363636">) = 0</span></div>
<div style="position:absolute;left:119.5px;top:481px;font-family:'Liberation Mono',monospace;font-size:18.33px;line-height:22px;white-space:pre;transform:scaleY(0.89);transform-origin:0 0;"><span style="color:#2c2c94">   If </span><span style="color:#363636">?B1</span><span style="color:#4a1010">{</span><span style="color:#389438">Prop:Disable</span><span style="color:#4a1010">}</span><span style="color:#363636"> = </span><span style="color:#389438">False</span><span style="color:#2c2c94"> then </span><span style="color:#2c2c94">Disable</span><span style="color:#363636">(?B1,?B7).</span></div>
<div style="position:absolute;left:119.5px;top:502px;font-family:'Liberation Mono',monospace;font-size:18.33px;line-height:22px;white-space:pre;transform:scaleY(0.89);transform-origin:0 0;"><span style="color:#2c2c94">elsIf </span><span style="color:#363636">?B1</span><span style="color:#4a1010">{</span><span style="color:#389438">Prop:Disable</span><span style="color:#4a1010">}</span><span style="color:#363636"> = </span><span style="color:#389438">True</span><span style="color:#2c2c94">  then </span><span style="color:#2c2c94">Enable</span><span style="color:#363636">( ?B1,?B7).</span></div>
<div style="position:absolute;left:92px;top:559px;width:637px;height:17px;background-color:#fff;background-image:repeating-conic-gradient(#f0f0f0 0 25%,#fff 0 50%);background-size:2px 2px;"></div>
<div style="position:absolute;left:92px;top:559px;width:17px;height:17px;background:#f0f0f0;border-top:1px solid #fff;border-left:1px solid #fff;border-right:1px solid #696969;border-bottom:1px solid #696969;box-shadow:inset -1px -1px 0 #a0a0a0;"></div>
<svg style="left:97px;top:563px" width="5" height="9" viewBox="0 0 5 9"><path d="M4.5 0 V9 L0 4.5 Z" fill="#000"/></svg>
<div style="position:absolute;left:109px;top:559px;width:17px;height:17px;background:#f0f0f0;border-top:1px solid #fff;border-left:1px solid #fff;border-right:1px solid #696969;border-bottom:1px solid #696969;box-shadow:inset -1px -1px 0 #a0a0a0;"></div>
<div style="position:absolute;left:92px;top:576px;width:637px;height:1px;background:#646464;"></div>
<div style="position:absolute;left:100px;top:580px;width:416px;height:14px;border-top:1px solid #a0a0a0;border-left:1px solid #a0a0a0;border-right:1px solid #fff;border-bottom:1px solid #fff;"></div>
<div style="position:absolute;left:524px;top:580px;width:59px;height:14px;border-top:1px solid #a0a0a0;border-left:1px solid #a0a0a0;border-right:1px solid #fff;border-bottom:1px solid #fff;"></div><div style="position:absolute;left:527px;top:581px;font-size:11px;line-height:15px;color:#000;white-space:pre;letter-spacing:-0.25px;-webkit-text-stroke:0.2px currentColor;">Line:</div>
<div style="position:absolute;left:560px;top:581px;font-size:11px;line-height:15px;color:#000;white-space:pre;letter-spacing:-0.25px;-webkit-text-stroke:0.2px currentColor;">1</div>
<div style="position:absolute;left:592px;top:580px;width:59px;height:14px;border-top:1px solid #a0a0a0;border-left:1px solid #a0a0a0;border-right:1px solid #fff;border-bottom:1px solid #fff;"></div><div style="position:absolute;left:595px;top:581px;font-size:11px;line-height:15px;color:#000;white-space:pre;letter-spacing:-0.25px;-webkit-text-stroke:0.2px currentColor;">Col:</div>
<div style="position:absolute;left:625px;top:581px;font-size:11px;line-height:15px;color:#000;white-space:pre;letter-spacing:-0.25px;-webkit-text-stroke:0.2px currentColor;">3</div>
<div style="position:absolute;left:660px;top:580px;width:59px;height:14px;border-top:1px solid #a0a0a0;border-left:1px solid #a0a0a0;border-right:1px solid #fff;border-bottom:1px solid #fff;"></div><div style="position:absolute;left:663px;top:581px;font-size:11px;line-height:15px;color:#000;white-space:pre;letter-spacing:-0.25px;-webkit-text-stroke:0.2px currentColor;">Insert</div>
<div style="position:absolute;left:726px;top:580px;width:10px;height:14px;border-top:1px solid #a0a0a0;border-left:1px solid #a0a0a0;border-right:1px solid #fff;border-bottom:1px solid #fff;"></div>
<div style="position:absolute;left:91px;top:597px;width:640px;height:1px;background:#3c3c3c;"></div>
</div></body></html>
